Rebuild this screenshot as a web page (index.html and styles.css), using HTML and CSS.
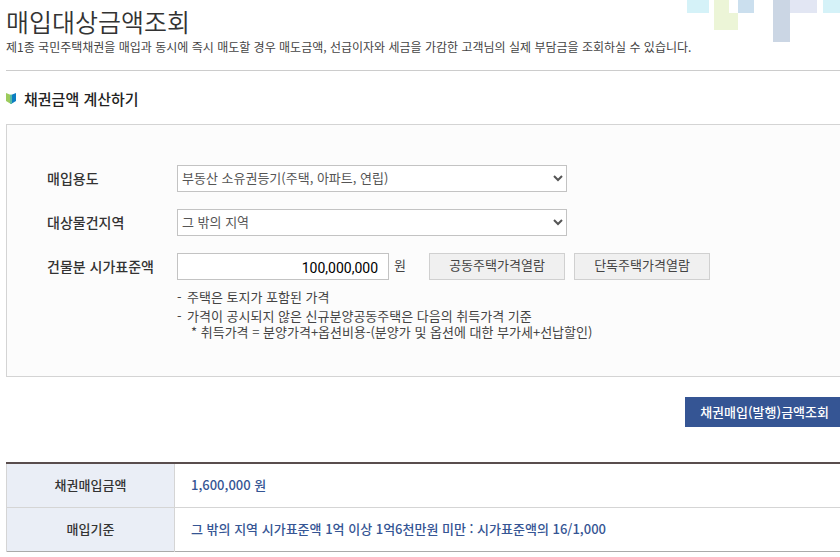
FILE: index.html
```html
<!DOCTYPE html>
<html lang="ko">
<head>
<meta charset="utf-8">
<meta name="viewport" content="width=device-width, initial-scale=1">
<title>매입대상금액조회</title>
<link rel="stylesheet" href="styles.css">
</head>
<body>
<main class="page">
  <header class="page-header">
    <svg class="decor" width="153" height="42" viewBox="0 0 153 42" aria-hidden="true" shape-rendering="crispEdges">
      <path fill="#d5f2f8" d="M0 0h22v13H0zM136 0h17v13h-17z"/>
      <path fill="#ecf5d7" d="M27 0h15v13h9v17H27z"/>
      <path fill="#cbdfee" d="M51 0h16v13H51z"/>
      <path fill="#cbd6e4" d="M86 0h17v42H86z"/>
      <path fill="#e2e6f3" d="M103 0h27v13h-27z"/>
    </svg>
    <h1 class="page-title">매입대상금액조회</h1>
    <p class="page-desc">제1종 국민주택채권을 매입과 동시에 즉시 매도할 경우 매도금액, 선급이자와 세금을 가감한 고객님의 실제 부담금을 조회하실 수 있습니다.</p>
  </header>

  <h2 class="section-title">
    <svg width="10" height="11" viewBox="0 0 10 11" aria-hidden="true">
      <path fill="#9ccb5c" d="M0 0l5 2v9L0 8z"/>
      <path fill="#0c7dc2" d="M10 0L5 2v9l5-3z"/>
      <path fill="#55b9a4" d="M4 1.600l1 .4 1-.4v8.800l-1 .6-1-.6z"/>
    </svg>
    채권금액 계산하기
  </h2>

  <form>
    <div class="panel">
      <div class="field">
        <label class="field-label" for="purpose">매입용도</label>
        <select class="control select" id="purpose"><option>부동산 소유권등기(주택, 아파트, 연립)</option></select>
      </div>
      <div class="field">
        <label class="field-label" for="region">대상물건지역</label>
        <select class="control select" id="region"><option>그 밖의 지역</option></select>
      </div>
      <div class="field">
        <label class="field-label" for="price">건물분 시가표준액</label>
        <input class="control amount" id="price" type="text" value="100,000,000">
        <span class="unit">원</span>
        <button class="lookup" type="button">공동주택가격열람</button>
        <button class="lookup" type="button">단독주택가격열람</button>
      </div>
      <ul class="notes">
        <li>주택은 토지가 포함된 가격</li>
        <li>가격이 공시되지 않은 신규분양공동주택은 다음의 취득가격 기준
          <span class="formula">* 취득가격 = 분양가격+옵션비용-(분양가 및 옵션에 대한 부가세+선납할인)</span></li>
      </ul>
    </div>
    <div class="actions">
      <button class="submit" type="button">채권매입(발행)금액조회</button>
    </div>
  </form>

  <table class="result">
    <tbody>
      <tr><th scope="row">채권매입금액</th><td>1,600,000 원</td></tr>
      <tr><th scope="row">매입기준</th><td>그 밖의 지역 시가표준액 1억 이상 1억6천만원 미만 : 시가표준액의 16/1,000</td></tr>
    </tbody>
  </table>
</main>
</body>
</html>
```
FILE: styles.css
```css
* {
  box-sizing: border-box;
}

body {
  margin: 0;
  background: #fff;
  color: #444;
  font-family: "Noto Sans CJK KR", sans-serif;
  font-size: 13px;
  line-height: 16px;
}

h1, h2, p, ul {
  margin: 0;
  padding: 0;
}

button, input, select {
  font-family: inherit;
  font-size: 13px;
}

.page {
  padding-left: 6px;
}

.page-header {
  position: relative;
  height: 71px;
  padding-top: 4px;
  border-bottom: 1px solid #ccc;
}

.decor {
  position: absolute;
  top: 0;
  right: 0;
}

.page-title {
  color: #333;
  font-size: 25px;
  font-weight: 350;
  line-height: 34px;
}

.page-desc {
  font-size: 12px;
  line-height: 18px;
}

.section-title {
  display: flex;
  align-items: center;
  gap: 8px;
  height: 53px;
  padding-top: 2px;
  color: #222;
  font-size: 15px;
  font-weight: 500;
}

.panel {
  padding: 40px 0 33px 40px;
  border: 1px solid #d4d4d4;
  border-right: 0;
  background: #fcfcfc;
}

.field {
  display: flex;
  align-items: center;
  margin-bottom: 17px;
}

.field-label {
  width: 130px;
  padding-bottom: 2px;
  color: #333;
  font-size: 14px;
  font-weight: 500;
}

.control {
  height: 27px;
  border: 1px solid #c3c3c3;
  border-radius: 0;
  background: #fff;
}

.select {
  width: 390px;
  padding: 0 0 2px;
  color: #555;
}

.amount {
  width: 212px;
  padding: 2px 10px 0;
  color: #000;
  font-family: Roboto, sans-serif;
  font-size: 14px;
  text-align: right;
}

.unit {
  width: 35px;
  margin-left: 5px;
  padding-bottom: 4px;
}

.lookup {
  width: 136px;
  height: 27px;
  margin-right: 9px;
  padding: 0 0 4px;
  border: 1px solid #d0d0d0;
  background: #f0f0f0;
  color: #444;
}

.notes {
  margin: -8px 0 0 130px;
  list-style: none;
}

.notes li {
  padding-left: 10px;
  margin-bottom: 3px;
}

.notes li::before {
  content: "-";
  float: left;
  margin-left: -10px;
}

.formula {
  display: block;
  padding-left: 4px;
}

.actions {
  display: flex;
  justify-content: flex-end;
  margin: 20px 0 35px;
}

.submit {
  height: 30px;
  padding: 0 11px 2px 15px;
  border: 0;
  background: #355594;
  color: #fff;
  font-weight: 500;
}

.result {
  width: 100%;
  border-collapse: collapse;
  border-top: 2px solid #594d4d;
  border-bottom: 1px solid #aaa;
}

.result th,
.result td {
  height: 44px;
  padding: 0 16px 1px;
  border-top: 1px solid #d5d5d5;
  font-weight: 500;
}

.result tr:first-child > * {
  border-top: 0;
}

.result th {
  width: 168px;
  border-left: 1px solid #d5d5d5;
  border-right: 1px solid #d5d5d5;
  background: #eaeef6;
  color: #333;
}

.result td {
  color: #355594;
  text-align: left;
}
```
